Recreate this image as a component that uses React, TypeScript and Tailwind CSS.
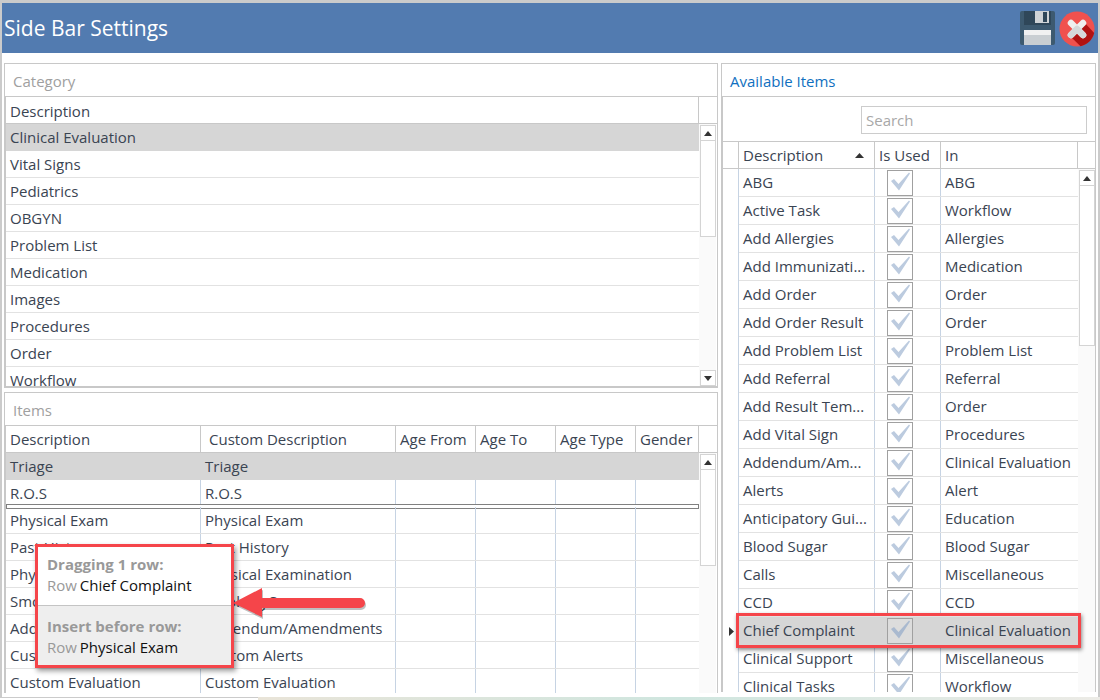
import React from 'react';

const categories = [
  'Clinical Evaluation', 'Vital Signs', 'Pediatrics', 'OBGYN', 'Problem List',
  'Medication', 'Images', 'Procedures', 'Order', 'Workflow'
];

const items = [
  ['Triage', 'Triage'],
  ['R.O.S', 'R.O.S'],
  ['Physical Exam', 'Physical Exam'],
  ['Past History', 'Past History'],
  ['Physical Examination', 'Physical Examination'],
  ['Smoking S', 'Smoking S'],
  ['Addendum/Amendments', 'Addendum/Amendments'],
  ['Custom Alerts', 'Custom Alerts'],
  ['Custom Evaluation', 'Custom Evaluation']
];

const available = [
  ['ABG', 'ABG'],
  ['Active Task', 'Workflow'],
  ['Add Allergies', 'Allergies'],
  ['Add Immunizati...', 'Medication'],
  ['Add Order', 'Order'],
  ['Add Order Result', 'Order'],
  ['Add Problem List', 'Problem List'],
  ['Add Referral', 'Referral'],
  ['Add Result Tem...', 'Order'],
  ['Add Vital Sign', 'Procedures'],
  ['Addendum/Am...', 'Clinical Evaluation'],
  ['Alerts', 'Alert'],
  ['Anticipatory Gui...', 'Education'],
  ['Blood Sugar', 'Blood Sugar'],
  ['Calls', 'Miscellaneous'],
  ['CCD', 'CCD'],
  ['Chief Complaint', 'Clinical Evaluation'],
  ['Clinical Support', 'Miscellaneous'],
  ['Clinical Tasks', 'Workflow']
];

const itemCols = ['w-[195px]', 'w-[195px]', 'w-[80px]', 'w-[80px]', 'w-[80px]', 'w-[63px]'];

const SaveIcon = () => (
  <svg width="36" height="35" viewBox="0 0 36 35">
    <rect x="0" y="0" width="35" height="34" rx="2" fill="#3d5a70" />
    <rect x="4" y="0" width="27" height="14" fill="#2f4759" />
    <rect x="15" y="0" width="14" height="12" fill="#cfd3d6" />
    <rect x="23" y="1" width="4" height="10" fill="#2f4759" />
    <rect x="4" y="19" width="27" height="15" fill="#c9ced2" />
    <rect x="4" y="19" width="27" height="5" fill="#f1f1f1" />
  </svg>
);

const CloseIcon = () => (
  <svg width="36" height="36" viewBox="0 0 36 36">
    <circle cx="18" cy="18" r="17.5" fill="#f0514e" />
    <path d="M18 18 L11 25 L21.5 35.2 C28 34 33.5 29 35.2 22 L25 11 Z" fill="#b01212" />
    <path d="M12 12 L24 24 M24 12 L12 24" stroke="#efefef" strokeWidth="6.5" strokeLinecap="round" />
    <path d="M18 18 L24 24 M18 18 L12 24" stroke="#d5d8da" strokeWidth="6.5" strokeLinecap="round" />
  </svg>
);

const Arrow = ({ down }: { down?: boolean }) => (
  <div className="h-[16px] w-[16px] shrink-0 border border-[#d4d4d4] bg-white flex items-center justify-center">
    <svg width="8" height="5" viewBox="0 0 8 5">
      <path d={down ? 'M0 0 L8 0 L4 5 Z' : 'M4 0 L8 5 L0 5 Z'} fill="#333" />
    </svg>
  </div>
);

const Scrollbar = ({ thumb, noDown }: { thumb: string; noDown?: boolean }) => (
  <div className="w-[17px] shrink-0 flex flex-col bg-[#fafafa] pl-px pt-px">
    <Arrow />
    <div className={`${thumb} w-[16px] shrink-0 border-x border-b border-[#d4d4d4] bg-white`} />
    <div className="flex-1" />
    {!noDown && <Arrow down />}
  </div>
);

const HeaderCell = ({ className, children }: { className: string; children?: React.ReactNode }) => (
  <div className={`${className} shrink-0 h-full border-r border-[#c8c8c8] px-[4px] pt-[1px] flex items-center whitespace-nowrap overflow-hidden`}>
    {children}
  </div>
);

const CheckBox = ({ selected }: { selected?: boolean }) => (
  <div className={`h-[26px] w-[26px] border border-[#a0a0a0] ${selected ? 'bg-[#dcdcdc]' : 'bg-white'}`}>
    <svg width="24" height="24" viewBox="0 0 24 24">
      <path d="M3 10 L6 8 L10.5 13 L21 1.5 L22 2.5 L11 19.5 Z" fill={selected ? '#a9b9cf' : '#bccbdf'} />
    </svg>
  </div>
);

const PanelTitle = ({ className, children }: { className: string; children: React.ReactNode }) => (
  <div className={`h-[32px] shrink-0 flex items-center px-[8px] pt-[3px] text-[15px] ${className}`}>{children}</div>
);

export default function App() {
  return (
    <div className="relative h-[700px] w-[1100px] overflow-hidden bg-[#cbcbcb] font-['Open_Sans',sans-serif] text-[15px] text-[#3a4452] pt-[3px] px-[2px]">
      {/* HEADER */}
      <div className="h-[50px] bg-[#527bb0] flex items-center justify-between pl-[2px] pr-[3px]">
        <h1 className="text-[21px] text-white pt-[2px]">Side Bar Settings</h1>
        <div className="flex items-center gap-[3px] pt-[1px]">
          <SaveIcon />
          <CloseIcon />
        </div>
      </div>

      {/* BODY */}
      <div className="h-[644px] bg-white pt-[10px] pl-[2px] flex gap-[3px] overflow-hidden">
        {/* LEFT COLUMN */}
        <div className="w-[714px] flex flex-col gap-[4px]">
          {/* CATEGORY */}
          <div className="h-[325px] shrink-0 border border-b-2 border-[#c8c8c8] flex flex-col overflow-hidden">
            <PanelTitle className="text-[#a0a0a0]">Category</PanelTitle>
            <div className="h-[28px] shrink-0 border-y border-l border-[#c8c8c8] flex">
              <HeaderCell className="w-[693px]"><span className="mt-[2px]">Description</span></HeaderCell>
            </div>
            <div className="flex flex-1 min-h-0 border-l border-[#c8c8c8]">
              <div className="w-[693px] shrink-0 overflow-hidden">
                {categories.map((c, i) => (
                  <div
                    key={c}
                    className={`h-[27px] px-[4px] flex items-center whitespace-nowrap border-b ${i === 0 ? 'bg-[#d6d6d6] border-transparent' : 'border-[#e2e2e2]'}`}
                  >
                    {c}
                  </div>
                ))}
              </div>
              <Scrollbar thumb="h-[96px]" />
            </div>
          </div>

          {/* ITEMS */}
          <div className="h-[301px] shrink-0 border-x border-t border-[#c8c8c8] flex flex-col overflow-hidden">
            <PanelTitle className="text-[#a0a0a0]">Items</PanelTitle>
            <div className="h-[28px] shrink-0 border-y border-l border-[#c8c8c8] flex">
              <HeaderCell className={itemCols[0]}>Description</HeaderCell>
              <HeaderCell className={`${itemCols[1]} pl-[8px]`}>Custom Description</HeaderCell>
              <HeaderCell className={itemCols[2]}>Age From</HeaderCell>
              <HeaderCell className={itemCols[3]}>Age To</HeaderCell>
              <HeaderCell className={itemCols[4]}>Age Type</HeaderCell>
              <HeaderCell className={itemCols[5]}>Gender</HeaderCell>
            </div>
            <div className="flex flex-1 min-h-0 border-l border-[#c8c8c8]">
              <div className="w-[693px] shrink-0 overflow-hidden">
                {items.map((row, i) => (
                  <div
                    key={row[0]}
                    className={`relative h-[27px] flex border-b ${i === 0 ? 'bg-[#d6d6d6] border-transparent' : 'border-[#e2e2e2]'}`}
                  >
                    {itemCols.map((w, c) => (
                      <div
                        key={w + c}
                        className={`${w} shrink-0 px-[4px] flex items-center whitespace-nowrap ${i === 0 || c === 5 ? '' : 'border-r border-[#c6d3e3]'}`}
                      >
                        {row[c]}
                      </div>
                    ))}
                    {i === 1 && (
                      <div className="absolute left-0 right-0 bottom-[-3px] h-[5px] border border-[#808080] bg-white" />
                    )}
                  </div>
                ))}
              </div>
              <Scrollbar thumb="h-[96px]" noDown />
            </div>
          </div>
        </div>

        {/* RIGHT COLUMN */}
        <div className="w-[375px] h-[629px] border-x border-t border-[#c8c8c8] flex flex-col overflow-hidden">
          <PanelTitle className="text-[#1070c0] pl-[8px]">Available Items</PanelTitle>
          <div className="flex-1 min-h-0 flex flex-col border-t border-l border-[#c8c8c8]">
            <div className="h-[44px] shrink-0 flex items-center justify-end pr-[8px] pt-[1px]">
              <div className="h-[28px] w-[226px] border border-[#cccccc] px-[4px] pt-[1px] flex items-center text-[#a8a8a8]">
                Search
              </div>
            </div>
            <div className="h-[28px] shrink-0 border-y border-[#c8c8c8] flex">
              <HeaderCell className="w-[16px]" />
              <HeaderCell className="w-[136px] justify-between">
                Description
                <svg width="9" height="5" viewBox="0 0 9 5" className="mr-[6px]">
                  <path d="M4.5 0 L9 5 L0 5 Z" fill="#333" />
                </svg>
              </HeaderCell>
              <HeaderCell className="w-[66px]">Is Used</HeaderCell>
              <HeaderCell className="w-[137px]">In</HeaderCell>
            </div>
            <div className="flex-1 min-h-0 flex">
              <div className="w-[16px] shrink-0 border-r border-[#c6d3e3] relative">
                <svg width="5" height="9" viewBox="0 0 5 9" className="absolute left-[6px] top-[458px]">
                  <path d="M0 0 L5 4.5 L0 9 Z" fill="#333" />
                </svg>
              </div>
              <div className="w-[339px] shrink-0 overflow-hidden">
                {available.map((row) => {
                  const selected = row[0] === 'Chief Complaint';
                  return (
                    <div
                      key={row[0]}
                      className={`h-[28px] flex items-center border-b ${selected ? 'bg-[#d6d6d6] border-transparent' : 'border-[#e2e2e2]'}`}
                    >
                      <div className={`w-[136px] h-full shrink-0 px-[4px] flex items-center whitespace-nowrap ${selected ? '' : 'border-r border-[#c6d3e3]'}`}>
                        {row[0]}
                      </div>
                      <div className={`w-[66px] h-full shrink-0 pl-[12px] flex items-center ${selected ? '' : 'border-r border-[#c6d3e3]'}`}>
                        <CheckBox selected={selected} />
                      </div>
                      <div className="w-[137px] h-full shrink-0 px-[4px] flex items-center whitespace-nowrap">{row[1]}</div>
                    </div>
                  );
                })}
              </div>
              <Scrollbar thumb="h-[160px]" noDown />
            </div>
          </div>
        </div>
      </div>

      {/* BOTTOM STRIP (desktop behind the window) */}
      <div className="absolute left-0 right-0 bottom-0 h-[3px] flex">
        <div className="w-[258px] bg-white border-t border-[#cbcbcb]" />
        <div className="flex-1 bg-gradient-to-r from-[#e9e4d8] via-[#cfe6df] to-[#ecebe6]" />
      </div>

      {/* CHIEF COMPLAINT HIGHLIGHT */}
      <div className="absolute left-[736px] top-[613px] h-[35px] w-[345px] border-[3px] border-[#f5454a] shadow-[1px_2px_4px_rgba(0,0,0,0.45)]" />

      {/* DRAG TOOLTIP */}
      <div className="absolute left-[35px] top-[544px] h-[124px] w-[199px] border-[3px] border-[#f5454a] bg-white shadow-[2px_3px_5px_rgba(0,0,0,0.4)] flex flex-col">
        <div className="h-[59px] shrink-0 border-b border-[#c4c4c4] pl-[9px] pt-[7px] leading-[21px]">
          <div className="font-bold text-[#999999]">Dragging 1 row:</div>
          <div className="text-[#111]"><span className="text-[#999999] mr-[-1px]">Row</span> Chief Complaint</div>
        </div>
        <div className="flex-1 bg-[#eeeeee] pl-[9px] pt-[10px] leading-[21px]">
          <div className="font-bold text-[#999999]">Insert before row:</div>
          <div className="text-[#111]"><span className="text-[#999999] mr-[-1px]">Row</span> Physical Exam</div>
        </div>
      </div>

      {/* ARROW */}
      <svg width="138" height="36" viewBox="0 0 138 36" className="absolute left-[231px] top-[586px]">
        <path d="M2 17 L31 2 L31 12 L129 12 A5 5 0 0 1 129 22 L31 22 L31 31 Z" fill="#000" opacity="0.25" transform="translate(1 2)" />
        <path d="M2 17 L31 2 L31 12 L129 12 A5 5 0 0 1 129 22 L31 22 L31 31 Z" fill="#f5454a" />
      </svg>
    </div>
  );
}
